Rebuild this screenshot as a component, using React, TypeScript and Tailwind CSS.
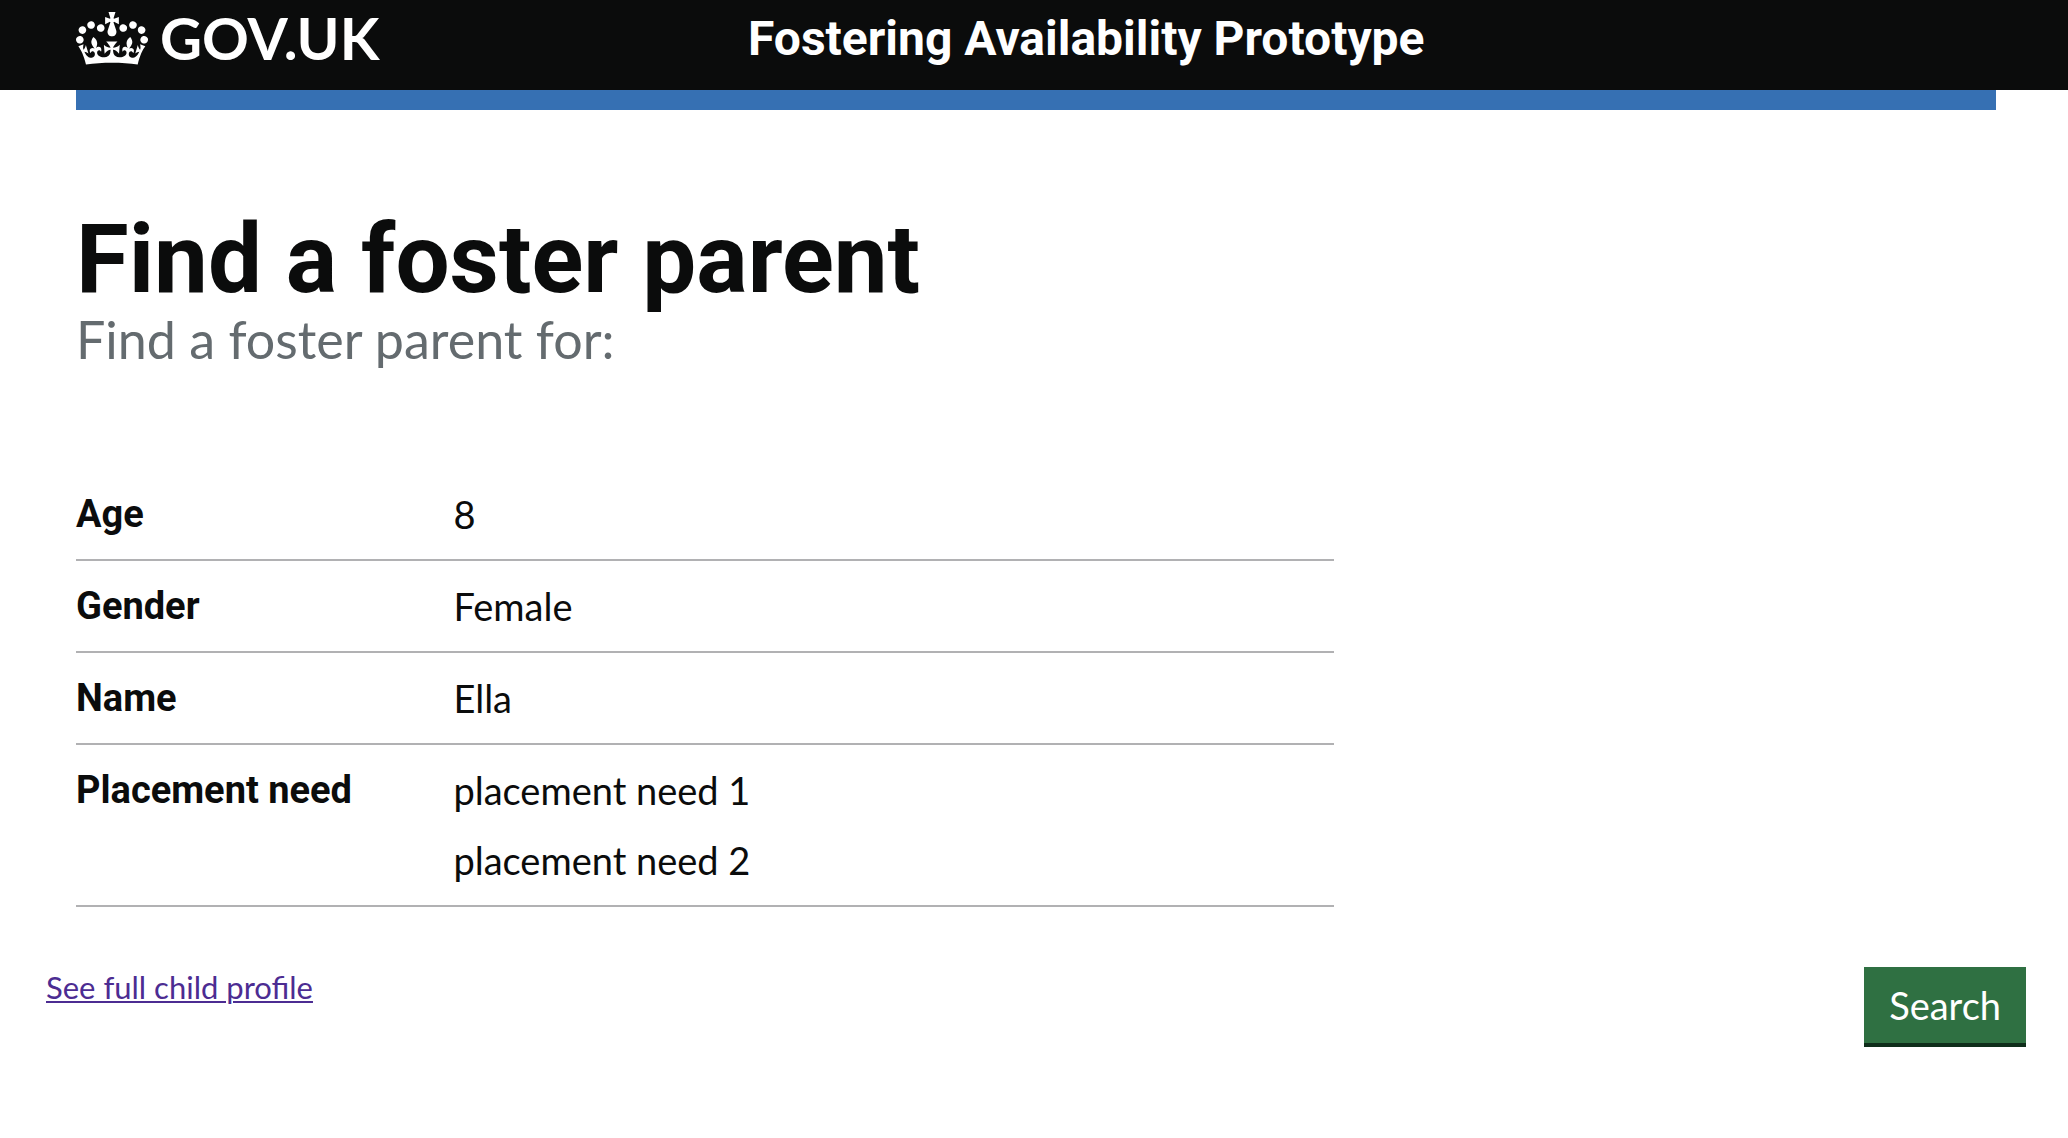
const details = [
  { term: "Age", values: ["8"] },
  { term: "Gender", values: ["Female"] },
  { term: "Name", values: ["Ella"] },
  { term: "Placement need", values: ["placement need 1", "placement need 2"] },
];

function Crown() {
  return (
    <svg aria-hidden="true" viewBox="0 0 132 97" className="h-[53px] w-[72px] shrink-0" fill="currentColor">
      <path d="M25 30.2c3.5 1.5 7.7-.2 9.1-3.7 1.5-3.6-.2-7.8-3.9-9.2-3.6-1.4-7.6.3-9.1 3.9-1.4 3.5.3 7.5 3.9 9zM9 39.5c3.6 1.5 7.8-.2 9.2-3.7 1.5-3.6-.2-7.8-3.9-9.1-3.6-1.5-7.6.2-9.1 3.8-1.4 3.5.3 7.5 3.8 9zM4.4 57.2c3.5 1.5 7.7-.2 9.1-3.8 1.5-3.6-.2-7.7-3.9-9.1-3.5-1.5-7.6.3-9.1 3.8-1.4 3.5.3 7.6 3.9 9.1zm38.3-21.4c3.5 1.5 7.7-.2 9.1-3.8 1.5-3.6-.2-7.7-3.9-9.1-3.6-1.5-7.6.3-9.1 3.8-1.3 3.6.4 7.7 3.9 9.1zm64.4-5.6c-3.6 1.5-7.8-.2-9.1-3.7-1.5-3.6.2-7.8 3.8-9.2 3.6-1.4 7.7.3 9.2 3.9 1.3 3.5-.4 7.5-3.9 9zm15.9 9.3c-3.6 1.5-7.7-.2-9.1-3.7-1.5-3.6.2-7.8 3.7-9.1 3.6-1.5 7.7.2 9.2 3.8 1.5 3.5-.3 7.5-3.8 9zm4.7 17.7c-3.6 1.5-7.8-.2-9.2-3.8-1.5-3.6.2-7.7 3.9-9.1 3.6-1.5 7.7.3 9.2 3.8 1.3 3.5-.4 7.6-3.9 9.1zM89.3 35.8c-3.6 1.5-7.8-.2-9.2-3.8-1.4-3.6.2-7.7 3.9-9.1 3.6-1.5 7.7.3 9.2 3.8 1.4 3.6-.3 7.7-3.9 9.1zM69.7 17.7l8.9 4.7V9.3l-8.9 2.8c-.2-.3-.5-.6-.9-.9L72.4 0H59.6l3.5 11.2c-.3.3-.6.5-.9.9l-8.8-2.8v13.1l8.8-4.7c.3.3.6.7.9.9l-5 15.4v.1c-.2.8-.4 1.6-.4 2.4 0 4.1 3.1 7.5 7 8.1h.2c.3 0 .7.1 1 .1.4 0 .7 0 1-.1h.2c4-.6 7.1-4.1 7.1-8.1 0-.8-.1-1.7-.4-2.4V34l-5.1-15.4c.4-.2.7-.6 1-.9zM66 92.8c16.9 0 32.8 1.1 47.1 3.2 4-16.9 8.9-26.7 14-33.5l-9.6-3.4c1 4.9 1.1 7.2 0 10.2-1.5-1.4-3-4.3-4.2-8.7L108.6 76c2.8-2 5-3.2 7.5-3.3-4.4 9.4-10 11.9-13.6 11.2-4.3-.8-6.3-4.6-5.6-7.9 1-4.7 5.7-5.9 8-.5 4.3-8.7-3-11.4-7.6-8.8 7.1-7.2 7.9-13.5 2.1-21.1-8 6.1-8.1 12.3-4.5 20.8-4.7-5.4-12.1-2.5-9.5 6.2 3.4-5.2 7.9-2 7.2 3.1-.6 4.3-6.4 7.8-13.5 7.2-10.3-.9-10.9-8-11.2-13.8 2.5-.5 7.1 1.8 11 7.3L80.2 60c-4.1 4.4-8 5.3-12.3 5.4 1.4-4.4 8-11.6 8-11.6H55.5s6.4 7.2 7.9 11.6c-4.2-.1-8-1-12.3-5.4l1.4 16.4c3.9-5.5 8.5-7.7 10.9-7.3-.3 5.8-.9 12.8-11.1 13.8-7.2.6-12.9-2.9-13.5-7.2-.7-5 3.8-8.3 7.1-3.1 2.7-8.7-4.6-11.6-9.4-6.2 3.7-8.5 3.6-14.7-4.6-20.8-5.8 7.6-5 13.9 2.2 21.1-4.7-2.6-11.9.1-7.7 8.8 2.3-5.5 7.1-4.2 8.1.5.7 3.3-1.3 7.1-5.7 7.9-3.5.7-9-1.8-13.5-11.2 2.5.1 4.7 1.3 7.5 3.3l-4.7-15.4c-1.2 4.4-2.7 7.2-4.3 8.7-1.1-3-.9-5.3 0-10.2l-9.5 3.4c5 6.9 9.9 16.7 14 33.5 14.8-2.1 30.8-3.2 47.7-3.2z" />
    </svg>
  );
}

function Header() {
  return (
    <header>
      <div className="flex items-start bg-[#0b0c0c] pt-[7px] pr-[72px] pb-[21px] pl-[76px] text-white">
        <div className="flex w-[35%] shrink-0">
          <a href="#" className="flex items-center gap-3">
            <Crown />
            <span className="text-[58px] leading-[62px] font-bold">GOV.UK</span>
          </a>
        </div>
        <a
          href="#"
          className="pt-0.5 font-[Roboto,sans-serif] text-[48px] leading-[60px] font-bold whitespace-nowrap"
        >
          Fostering Availability Prototype
        </a>
      </div>
      <div className="mr-[72px] ml-[76px] h-5 bg-[#3670b3]" />
    </header>
  );
}

function SummaryList() {
  return (
    <dl className="mt-[102px] w-[calc((100%_-_33px)*2/3)] text-[38px] leading-[50px]">
      {details.map(({ term, values }) => (
        <div key={term} className="flex border-b-2 border-[#b1b1b3] py-5">
          <dt className="w-[30%] shrink-0 font-[Roboto,sans-serif] font-bold">{term}</dt>
          <dd className="flex flex-1 flex-col gap-5">
            {values.map((value) => (
              <p key={value}>{value}</p>
            ))}
          </dd>
        </div>
      ))}
    </dl>
  );
}

export default function App() {
  return (
    <div className="min-h-screen bg-white font-[Lato,sans-serif] text-[#0b0c0c]">
      <Header />
      <main className="pt-[97px] pr-[72px] pb-[80px] pl-[76px]">
        <h1 className="font-[Roboto,sans-serif] text-[96px] leading-[104px] font-bold">Find a foster parent</h1>
        <p className="text-[52px] leading-[56px] text-[#646b6f]">Find a foster parent for:</p>
        <SummaryList />
        <div className="-mx-[30px] mt-[60px] flex items-start justify-between">
          <a
            href="#"
            className="text-[31px] leading-[40px] text-[#4c2c92] underline decoration-2 underline-offset-2"
          >
            See full child profile
          </a>
          <button
            type="button"
            className="border-b-4 border-[#0f2e1b] bg-[#2f7042] px-[25px] py-[13px] text-[38px] leading-[50px] text-white"
          >
            Search
          </button>
        </div>
      </main>
    </div>
  );
}
